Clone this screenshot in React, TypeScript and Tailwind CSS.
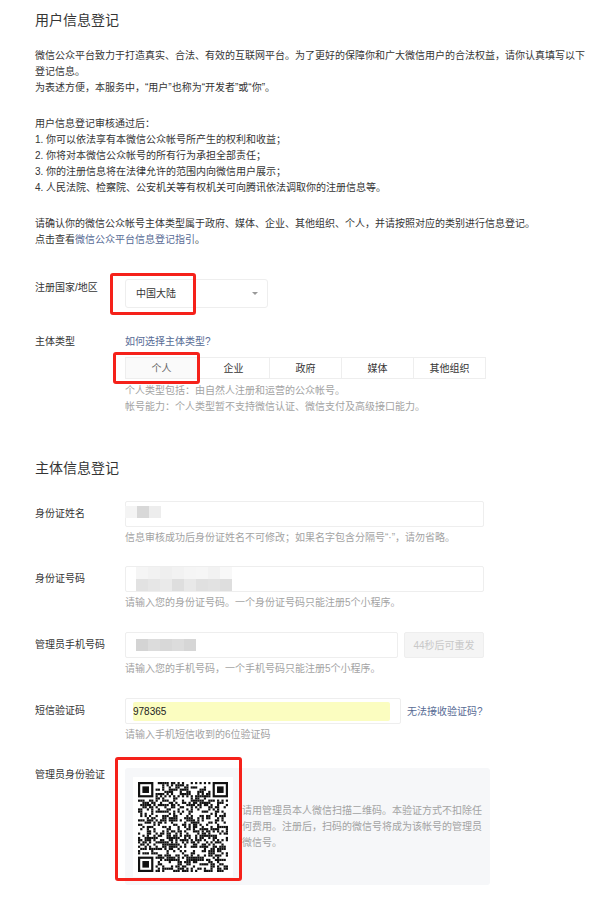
import React from "react";

const labelCls = "w-[90px] shrink-0 text-[10px] leading-[16px] text-[#353535]";
const hintCls = "text-[10px] leading-[16px] text-[#a3a3a3]";
const inputCls = "h-[26px] border border-[#eeeeee] rounded-[2px] bg-white";

const tabs = ["个人", "企业", "政府", "媒体", "其他组织"];

// rough QR look: fixed finder squares plus seeded noise
function QrCode() {
  const n = 41;
  const cells: React.ReactNode[] = [];
  let seed = 978365;
  const next = () => {
    seed = (seed * 1103515245 + 12345) & 0x7fffffff;
    return (seed >> 16) & 1;
  };
  const inFinder = (x: number, y: number) =>
    (x < 8 && y < 8) || (x >= n - 8 && y < 8) || (x < 8 && y >= n - 8);
  for (let y = 0; y < n; y++) {
    for (let x = 0; x < n; x++) {
      const on = next();
      if (!inFinder(x, y) && on) {
        cells.push(<rect key={`${x}-${y}`} x={x} y={y} width="1" height="1" />);
      }
    }
  }
  const finder = (x: number, y: number) => (
    <g key={`f-${x}-${y}`}>
      <rect x={x} y={y} width="7" height="7" />
      <rect x={x + 1} y={y + 1} width="5" height="5" fill="#fff" />
      <rect x={x + 2} y={y + 2} width="3" height="3" />
    </g>
  );
  return (
    <svg viewBox={`0 0 ${n} ${n}`} className="w-[90px] h-[90px]" fill="#111">
      {cells}
      {finder(0, 0)}
      {finder(n - 7, 0)}
      {finder(0, n - 7)}
    </svg>
  );
}

function Mosaic({ cols }: { cols: string[] }) {
  return (
    <div className="flex h-[12px]">
      {cols.map((c, i) => (
        <div key={i} className="w-[12px] h-full" style={{ background: c }} />
      ))}
    </div>
  );
}

export default function App() {
  return (
    <div
      className="relative w-[605px] h-[897px] overflow-hidden bg-white pl-[35px] pt-[12px] text-[#353535]"
      style={{ fontFamily: '"Liberation Sans", "Noto Sans CJK SC", sans-serif' }}
    >
      <h2 className="text-[14px] leading-[16px] font-normal">用户信息登记</h2>

      <div className="w-[555px] mt-[20px] text-[10px] leading-[16px]">
        <p>{"微信公众平台致力于打造真实、合法、有效的互联网平台。为了更好的保障你和广大微信用户的合法权益\uFF0C请你认真填写以下登记信息。"}</p>
        <p>{"为表述方便\uFF0C本服务中\uFF0C“用户”也称为“开发者”或“你”。"}</p>
        <p className="mt-[20px]">{"用户信息登记审核通过后\uFF1A"}</p>
        <p>{"1. 你可以依法享有本微信公众帐号所产生的权利和收益\uFF1B"}</p>
        <p>{"2. 你将对本微信公众帐号的所有行为承担全部责任\uFF1B"}</p>
        <p>{"3. 你的注册信息将在法律允许的范围内向微信用户展示\uFF1B"}</p>
        <p>4. 人民法院、检察院、公安机关等有权机关可向腾讯依法调取你的注册信息等。</p>
        <p className="mt-[20px]">{"请确认你的微信公众帐号主体类型属于政府、媒体、企业、其他组织、个人\uFF0C并请按照对应的类别进行信息登记。"}</p>
        <p>
          点击查看<span className="text-[#576b95]">微信公众平台信息登记指引</span>。
        </p>
      </div>

      {/* 注册国家 */}
      <div className="flex mt-[31px]">
        <div className={`${labelCls} pt-[1px]`}>注册国家/地区</div>
        <div className="w-[143px] h-[29px] border border-[#eeeeee] rounded-[3px] flex items-center justify-between pl-[10px] pr-[9px] text-[10px]">
          <span>中国大陆</span>
          <span className="w-0 h-0 border-x-[3px] border-x-transparent border-t-[3px] border-t-[#999999]" />
        </div>
      </div>

      {/* 主体类型 */}
      <div className="flex mt-[26px]">
        <div className={labelCls}>主体类型</div>
        <div>
          <div className="text-[10px] leading-[16px] text-[#576b95]">如何选择主体类型?</div>
          <div className="flex w-[361px] h-[22px] mt-[7px] border border-[#eeeeee]">
            {tabs.map((t, i) => (
              <div
                key={t}
                className={`flex-1 flex items-center justify-center text-[10px] ${
                  i > 0 ? "border-l border-[#eeeeee]" : "bg-[#fafafa] text-[#666666]"
                }`}
              >
                {t}
              </div>
            ))}
          </div>
          <div className={`${hintCls} mt-[4px]`}>{"个人类型包括\uFF1A由自然人注册和运营的公众帐号。"}</div>
          <div className={hintCls}>{"帐号能力\uFF1A个人类型暂不支持微信认证、微信支付及高级接口能力。"}</div>
        </div>
      </div>

      <h2 className="text-[14px] leading-[16px] font-normal mt-[45px]">主体信息登记</h2>

      {/* 身份证姓名 */}
      <div className="flex mt-[25px]">
        <div className={`${labelCls} pt-[5px]`}>身份证姓名</div>
        <div>
          <div className={`${inputCls} w-[359px] flex items-center`}>
            <div className="blur-[0.5px] ml-[-1px] mb-[5px]">
              <Mosaic cols={["#f4f4f4", "#d8d8d8", "#ededed"]} />
            </div>
          </div>
          <div className={`${hintCls} mt-[3px]`}>{"信息审核成功后身份证姓名不可修改\uFF1B如果名字包含分隔号“·”\uFF0C请勿省略。"}</div>
        </div>
      </div>

      {/* 身份证号码 */}
      <div className="flex mt-[20px]">
        <div className={`${labelCls} pt-[5px]`}>身份证号码</div>
        <div>
          <div className={`${inputCls} w-[359px] flex flex-col justify-center pl-[10px]`}>
            <div className="blur-[0.5px]">
              <Mosaic cols={["#f5f5f5", "#f2f2f2", "#efefef", "#f2f2f2", "#f5f5f5", "#f6f6f6", "#f2f2f2", "#f8f8f8"]} />
              <Mosaic cols={["#e2e2e2", "#e6e6e6", "#eaeaea", "#dedede", "#e8e8e8", "#e0e0e0", "#e2e2e2", "#dedede"]} />
            </div>
          </div>
          <div className={`${hintCls} mt-[3px]`}>请输入您的身份证号码。一个身份证号码只能注册5个小程序。</div>
        </div>
      </div>

      {/* 手机号码 */}
      <div className="flex mt-[21px]">
        <div className={`${labelCls} pt-[5px]`}>管理员手机号码</div>
        <div>
          <div className="flex w-[359px] gap-[6px]">
            <div className={`${inputCls} flex-1 flex items-center pl-[10px]`}>
              <div className="blur-[0.5px]">
                <Mosaic cols={["#d4d4d4", "#dcdcdc", "#d8d8d8", "#dcdcdc", "#d6d6d6"]} />
              </div>
            </div>
            <div className="w-[80px] h-[26px] border border-[#eeeeee] rounded-[2px] bg-[#f5f5f5] flex items-center justify-center text-[10px] text-[#c8c8c8]">
              44秒后可重发
            </div>
          </div>
          <div className={`${hintCls} mt-[3px]`}>{"请输入您的手机号码\uFF0C一个手机号码只能注册5个小程序。"}</div>
        </div>
      </div>

      {/* 短信验证码 */}
      <div className="flex mt-[21px]">
        <div className={`${labelCls} pt-[5px]`}>短信验证码</div>
        <div>
          <div className="flex items-center gap-[6px]">
            <div className={`${inputCls} w-[276px] flex items-center pl-[7px]`}>
              <div className="w-[257px] h-[19px] rounded-[2px] bg-[#fbfdc0] flex items-center text-[10px] text-[#222222]">
                978365
              </div>
            </div>
            <span className="text-[10px] text-[#576b95]">无法接收验证码?</span>
          </div>
          <div className={`${hintCls} mt-[3px]`}>请输入手机短信收到的6位验证码</div>
        </div>
      </div>

      {/* 管理员身份验证 */}
      <div className="flex mt-[25px]">
        <div className={`${labelCls} mt-[-1px]`}>管理员身份验证</div>
        <div className="w-[365px] h-[117px] bg-[#f6f7f9] rounded-[3px] flex items-center pl-[8px]">
          <div className="w-[100px] h-[100px] shrink-0 bg-white flex items-center justify-center">
            <QrCode />
          </div>
          <div className="ml-[9px] w-[241px] text-[10px] leading-[16px] text-[#a3a3a3]">
            {"请用管理员本人微信扫描二维码。本验证方式不扣除任何费用。注册后\uFF0C扫码的微信号将成为该帐号的管理员微信号。"}
          </div>
        </div>
      </div>

      {/* 红框标注 */}
      <div className="absolute left-[110px] top-[273px] w-[86px] h-[42px] border-[3px] border-[#f5211a] rounded-[3px]" />
      <div className="absolute left-[113px] top-[352px] w-[87px] h-[32px] border-[3px] border-[#f5211a] rounded-[3px]" />
      <div className="absolute left-[115px] top-[757px] w-[127px] h-[124px] border-[3px] border-[#f5211a] rounded-[3px]" />
    </div>
  );
}
